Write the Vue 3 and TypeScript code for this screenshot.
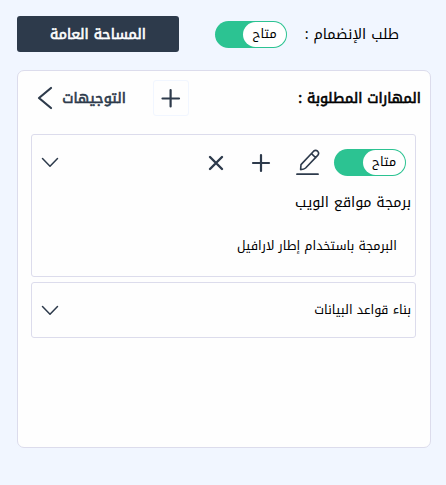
<script setup lang="ts">
import { ref } from 'vue'

interface Skill {
  title: string
  details: string[]
  open: boolean
}

const skills = ref<Skill[]>([
  { title: 'برمجة مواقع الويب', details: ['البرمجة باستخدام إطار لارافيل'], open: true },
  { title: 'بناء قواعد البيانات', details: [], open: false },
])
</script>

<template>
  <main class="page" dir="rtl">
    <header class="top">
      <span class="request">طلب الإنضمام :</span>
      <div class="toggle"><span class="knob">متاح</span></div>
      <button class="space strong">المساحة العامة</button>
    </header>

    <section class="panel">
      <div class="panel-head">
        <h2 class="heading strong">المهارات المطلوبة :</h2>
        <button class="add" aria-label="إضافة">
          <svg width="20" height="20" viewBox="0 0 20 20"><path d="M9.6 2v16.4M1.5 10.5h16.5" /></svg>
        </button>
        <a class="guide">
          <span class="guide-text strong">التوجيهات</span>
          <svg class="back" width="16" height="24" viewBox="0 0 16 24"><path d="M14 2 2 12l12 10" /></svg>
        </a>
      </div>

      <article v-for="skill in skills" :key="skill.title" class="card" :class="{ open: skill.open }">
        <div v-if="skill.open" class="tools">
          <div class="toggle"><span class="knob">متاح</span></div>
          <svg class="pencil" width="24" height="28" viewBox="0 0 24 28">
            <path d="M4.6 20.6 5 15.6 17.6 2.2q2-1.8 4 0 2 2 .1 4.2L9.6 19Q8 20.5 4.6 20.6ZM15.5 4.6l4.2 4.2" />
            <path class="rule" d="M1 25.2h21" />
          </svg>
          <svg class="plus" width="20" height="20" viewBox="0 0 20 20"><path d="M10 2v16M2 10h16" /></svg>
          <svg class="cross" width="16" height="16" viewBox="0 0 16 16"><path d="m2 2 12 12M14 2 2 14" /></svg>
          <svg class="chevron" width="18" height="11" viewBox="0 0 18 11"><path d="m1.5 1.5 7.5 7.7 7.5-7.7" /></svg>
        </div>
        <h3 class="title">{{ skill.title }}</h3>
        <svg v-if="!skill.open" class="chevron" width="18" height="11" viewBox="0 0 18 11"><path d="m1.5 1.5 7.5 7.7 7.5-7.7" /></svg>
        <template v-else>
          <p v-for="detail in skill.details" :key="detail" class="detail">{{ detail }}</p>
        </template>
      </article>
    </section>
  </main>
</template>

<style>
body {
  background: #f1f6ff;
}
</style>

<style scoped>
.page {
  box-sizing: border-box;
  width: 446px;
  height: 485px;
  padding: 16px 15px 0 17px;
  background: #f1f6ff;
  color: #000;
  font-family: "Noto Kufi Arabic", "Droid Arabic Kufi", "Noto Sans Arabic UI", "Noto Sans Arabic", "Noto Sans", "DejaVu Sans", sans-serif;
  font-size: 14.4px;
}
.page * {
  box-sizing: border-box;
}
button {
  font: inherit;
  padding: 0;
  border: 0;
}
svg {
  display: block;
  flex: none;
  fill: none;
  stroke: #2d3a4b;
  stroke-width: 2.2;
  stroke-linecap: round;
  stroke-linejoin: round;
}
.strong {
  font-weight: 400;
  -webkit-text-stroke: 0.6px currentColor;
}
.top {
  display: flex;
  align-items: center;
  height: 36px;
  padding-right: 32px;
}
.request {
  width: 94px;
  margin-left: 18px;
  white-space: nowrap;
}
.toggle {
  display: flex;
  flex: none;
  width: 72px;
  height: 27px;
  padding: 1px;
  border-radius: 14px;
  background: #2cc392;
}
.knob {
  width: 43px;
  height: 25px;
  border-radius: 13px;
  background: #fff;
  font-size: 12.6px;
  line-height: 25px;
  text-align: center;
}
.tools .knob {
  width: 42px;
}
.space {
  width: 162px;
  height: 36px;
  margin-right: auto;
  border-radius: 3px;
  background: #2d3a4b;
  color: #fff;
  white-space: nowrap;
}
.panel {
  height: 378px;
  margin-top: 18px;
  padding: 9px 14px 0 13px;
  border: 1px solid #dcdcec;
  border-radius: 7px;
  background: #fefefe;
}
.panel-head {
  display: flex;
  align-items: center;
  height: 36px;
  margin: 0 -5px 18px 0;
}
.heading {
  margin: 0;
  width: 123px;
  font-size: 14.4px;
  white-space: nowrap;
}
.add {
  display: grid;
  place-items: center;
  width: 36px;
  height: 36px;
  margin-right: 109px;
  border: 1px solid #f1f6ff;
  border-radius: 3px;
  background: #fefefe;
}
.guide {
  display: flex;
  align-items: center;
  margin-right: 27px;
  color: #2d3a4b;
}
.guide-text {
  width: 63px;
  white-space: nowrap;
}
.back {
  margin-right: 10px;
}
.card {
  display: flex;
  align-items: center;
  justify-content: space-between;
  width: 385px;
  height: 56px;
  margin-bottom: 5px;
  padding: 0 4px 0 9px;
  border: 1px solid #dcdcec;
  border-radius: 3px;
}
.card.open {
  display: block;
  height: 143px;
  padding-top: 14px;
}
.tools {
  display: flex;
  align-items: center;
  height: 27px;
  padding-right: 5px;
}
.pencil {
  margin-right: 14px;
  stroke-width: 1.6;
}
.rule {
  stroke-width: 1.8;
}
.plus {
  margin-right: 25px;
}
.cross {
  margin-right: 27px;
  stroke-width: 2.4;
}
.chevron {
  margin-right: auto;
  stroke-width: 1.5;
}
.title {
  margin: 0;
  font-size: 12.6px;
  font-weight: 400;
  line-height: 20px;
}
.open .title {
  margin-top: 17px;
  font-size: 14.4px;
}
.detail {
  margin: 23px 14px 0 0;
  font-size: 12.6px;
  line-height: 20px;
}
</style>
